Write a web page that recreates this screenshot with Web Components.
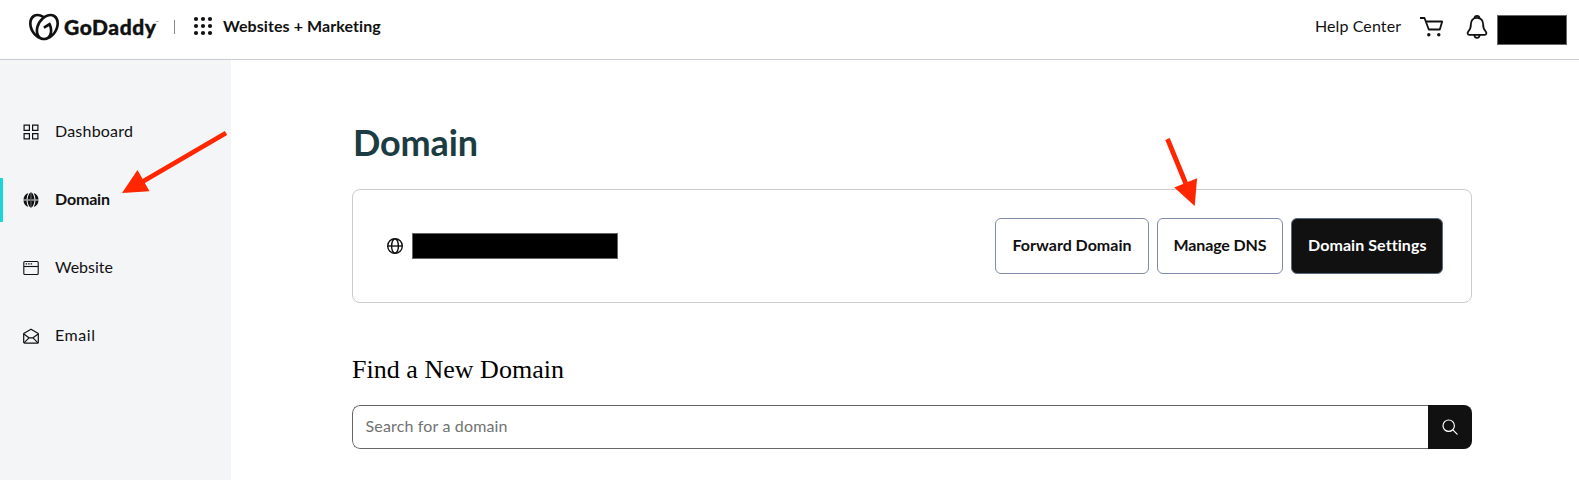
<!DOCTYPE html>
<html lang="en"><head><meta charset="utf-8"><title>Domain</title>
<style>
html,body{margin:0;height:100%;overflow:hidden;background:#fff}
body{font:16px/24px Lato,"Open Sans",sans-serif;color:#111}
</style></head><body>
<domain-app></domain-app>
<script>
const define=(name,html,init)=>customElements.define(name,class extends HTMLElement{
  connectedCallback(){
    if(this.shadowRoot)return;
    this.attachShadow({mode:'open'}).innerHTML=html;
    if(init)init(this,this.shadowRoot);
  }
});

/* One line of text, tracked out to the width given in the "width" attribute. */
define('tracked-text','<style>:host{display:block;white-space:nowrap}span{display:inline-block}</style><span><slot></slot></span>',(el,root)=>{
  const w=parseFloat(el.getAttribute('width')),span=root.querySelector('span');
  el.style.width=w+'px';
  span.style.letterSpacing='0';
  const n=el.textContent.length;
  span.style.letterSpacing=((w-span.getBoundingClientRect().width)/(n-1))+'px';
});

const icons={
  dashboard:'<g fill="none" stroke="#111" stroke-width="1.2"><path d="M1.1 1.1h5.3v5.3H1.1zM9.6 1.1h5.3v5.3H9.6zM1.1 9.6h5.3v5.3H1.1zM9.6 9.6h5.3v5.3H9.6z"/></g>',
  globeFill:'<path fill="#111" d="M5.3.9A7.5 7.5 0 0 0 .5 7.5h3A15 15 0 0 1 5.3.9zM.5 8.5a7.5 7.5 0 0 0 4.8 6.6A15 15 0 0 1 3.5 8.5zM10.7.9a7.5 7.5 0 0 1 4.8 6.6h-3A15 15 0 0 0 10.7.9zM15.5 8.5a7.5 7.5 0 0 1-4.8 6.6 15 15 0 0 0 1.8-6.6zM7.6.5C5.8 1.5 4.7 4.5 4.6 7.5H7.6zM8.4.5C10.2 1.5 11.3 4.5 11.4 7.5H8.4zM7.6 15.5C5.8 14.5 4.7 11.5 4.6 8.5H7.6zM8.4 15.5C10.2 14.5 11.3 11.5 11.4 8.5H8.4z"/><path stroke="#111" stroke-width="1" d="M8 .5v15"/><path stroke="#777" d="M.7 8h14.6"/>',
  website:'<g fill="none" stroke="#111" stroke-width="1.1"><rect x=".8" y="1.5" width="14.4" height="13" rx="1"/><path d="M.8 6.5h14.4"/><path stroke-width="1.2" stroke-dasharray="1.5 1" d="M2.600 3.9h6.5"/></g>',
  email:'<g fill="none" stroke="#111" stroke-width="1.2" stroke-linejoin="round"><path d="M.7 5.6 8 1.2l7.3 4.4v8.600a1 1 0 0 1-1 1H1.7a1 1 0 0 1-1-1z"/><path d="M.8 5.9 6 9.8h4l5.2-3.9M1 14.8l5-5M15 14.8l-5-5"/></g>',
  globe:'<g fill="none" stroke="#111" stroke-width="1.4"><circle cx="8" cy="8" r="7.3"/><ellipse cx="8" cy="8" rx="3.4" ry="7.3"/><path d="M.7 8h14.6"/></g>',
  search:'<g fill="none" stroke="#fff" stroke-width="1.2" stroke-linecap="round"><circle cx="6.7" cy="6.7" r="5.7"/><path d="m10.9 10.9 4.2 4.2"/></g>'
};
customElements.define('ui-icon',class extends HTMLElement{
  static observedAttributes=['name'];
  attributeChangedCallback(){
    const root=this.shadowRoot||this.attachShadow({mode:'open'});
    root.innerHTML='<style>:host{display:block;flex:none;width:16px;height:16px}svg{display:block}</style><svg width="16" height="16" viewBox="0 0 16 16">'+icons[this.getAttribute('name')]+'</svg>';
  }
});

define('redacted-bar','<style>:host{display:block;box-sizing:border-box;background:#000;border:1px solid #666;flex:none}</style>');

define('brand-logo',`<style>
:host{display:flex;align-items:flex-start;height:54px}
.heart{display:block;margin-top:12.5px}
tracked-text{font-weight:900;font-size:21px;line-height:28px;margin:13px 0 0 5px;-webkit-text-stroke:.4px #111}
small{font-size:3px;line-height:4px;margin-top:20px}
</style>
<svg class="heart" width="30" height="30" viewBox="0 0 24 24"><path fill="#111" d="M20.702 2.29c-2.494-1.554-5.778-1.187-8.706.654C9.076 1.104 5.79.736 3.3 2.29c-3.941 2.463-4.42 8.806-1.07 14.167 2.47 3.954 6.333 6.269 9.77 6.226 3.439.043 7.301-2.273 9.771-6.226 3.347-5.361 2.872-11.704-1.069-14.167zM4.042 15.328a12.838 12.838 0 01-1.546-3.541 10.12 10.12 0 01-.336-3.338c.15-1.98.956-3.524 2.27-4.345 1.315-.822 3.052-.87 4.903-.137.281.113.556.24.825.382A15.11 15.11 0 007.5 7.54c-2.035 3.255-2.655 6.878-1.945 9.765a13.247 13.247 0 01-1.514-1.98zm17.465-3.541a12.866 12.866 0 01-1.547 3.54 13.25 13.25 0 01-1.513 1.984c.635-2.589.203-5.76-1.353-8.734a.39.39 0 00-.563-.153l-4.852 3.032a.397.397 0 00-.126.546l.712 1.139a.395.395 0 00.547.126l3.145-1.965c.101.306.203.606.28.916.296 1.086.41 2.214.335 3.337-.15 1.982-.956 3.525-2.27 4.347a4.437 4.437 0 01-2.25.65h-.101a4.432 4.432 0 01-2.25-.65c-1.314-.822-2.121-2.365-2.27-4.347-.074-1.123.04-2.251.336-3.337a13.05 13.05 0 014.05-6.482 10.148 10.148 0 012.849-1.765c1.845-.733 3.586-.685 4.9.137 1.316.822 2.122 2.365 2.271 4.345a10.146 10.146 0 01-.33 3.334z"/></svg>
<tracked-text width="92">GoDaddy</tracked-text><small>™</small>`);

define('app-header',`<style>
:host{display:flex;box-sizing:border-box;height:60px;padding:0 12px 6px 29px;border-bottom:1px solid #c8ccd2;align-items:center;background:#fff}
brand-logo{width:145px}
.rule{width:1px;height:14px;background:#888}
.grid{margin:-1px 0 0 18px}
.product{font-weight:700;margin:-2px 0 0 10px}
.help{margin:-2px 0 0 auto}
.cart{margin-left:18px}
.bell{margin-left:21px}
redacted-bar{width:70px;height:30px;margin:6px 0 0 9px}
svg{display:block;flex:none}
</style>
<brand-logo></brand-logo><div class="rule"></div>
<svg class="grid" width="20" height="20" viewBox="0 0 20 20" fill="#111"><circle cx="3" cy="3" r="2.1"/><circle cx="10" cy="3" r="2.1"/><circle cx="17" cy="3" r="2.1"/><circle cx="3" cy="10" r="2.1"/><circle cx="10" cy="10" r="2.1"/><circle cx="17" cy="10" r="2.1"/><circle cx="3" cy="17" r="2.1"/><circle cx="10" cy="17" r="2.1"/><circle cx="17" cy="17" r="2.1"/></svg>
<tracked-text class="product" width="158">Websites + Marketing</tracked-text>
<tracked-text class="help" width="86">Help Center</tracked-text>
<svg class="cart" width="26" height="22" viewBox="0 0 26 22"><path d="M1 2h4.500l4.300 11.500h11L23.200 5.500H7.200" fill="none" stroke="#111" stroke-width="1.8" stroke-linejoin="round"/><circle cx="9.800" cy="18.700" r="1.7" fill="#111"/><circle cx="19.800" cy="18.700" r="1.7" fill="#111"/></svg>
<svg class="bell" width="22" height="26" viewBox="0 0 22 26" fill="none" stroke="#111" stroke-width="1.8" stroke-linejoin="round"><path d="M11 3.800c-4 0-6.100 2.900-6.100 6.500 0 4-.8 5.300-2.500 7-1.300 1.400-1 3.600 1 3.600h15.200c2 0 2.300-2.200 1-3.600-1.700-1.700-2.500-3-2.500-7 0-3.600-2.100-6.500-6.100-6.500z"/><path d="M8.500 4.200c.3-3.200 4.700-3.200 5 0M8.300 21c.3 3.700 5.100 3.700 5.400 0"/></svg>
<redacted-bar></redacted-bar>`);

define('nav-item',`<style>
:host{display:flex;box-sizing:border-box;height:44px;align-items:center;padding-left:20px;gap:16px;border-left:3px solid transparent}
:host([active]){border-color:#1bd5d8;font-weight:700}
::slotted(*){margin-top:-2px}
</style><ui-icon></ui-icon><slot></slot>`,(el,root)=>root.querySelector('ui-icon').setAttribute('name',el.getAttribute('icon')));

define('side-nav',`<style>
:host{display:flex;flex-direction:column;gap:24px;box-sizing:border-box;width:231px;padding-top:50px;background:#f4f5f7}
</style>
<nav-item icon="dashboard"><tracked-text width="78">Dashboard</tracked-text></nav-item>
<nav-item icon="globeFill" active><tracked-text width="55">Domain</tracked-text></nav-item>
<nav-item icon="website"><tracked-text width="58">Website</tracked-text></nav-item>
<nav-item icon="email"><tracked-text width="40">Email</tracked-text></nav-item>`);

define('action-button',`<style>
:host{display:flex;box-sizing:border-box;height:56px;align-items:center;justify-content:center;border:1px solid #7f8ba8;border-radius:6px;font-weight:700;background:#fff;padding-bottom:2px}
:host([primary]){background:#111;color:#fff;border-color:#5b6980}
</style><slot></slot>`);

define('domain-card',`<style>
:host{display:flex;box-sizing:border-box;height:114px;align-items:center;border:1px solid #ccc;border-radius:8px;padding:0 28px 0 34px}
redacted-bar{width:206px;height:26px;margin-left:9px}
.actions{display:flex;gap:8px;margin-left:auto}
</style>
<ui-icon name="globe"></ui-icon><redacted-bar></redacted-bar>
<div class="actions">
<action-button style="width:154px"><tracked-text width="119">Forward Domain</tracked-text></action-button>
<action-button style="width:126px"><tracked-text width="93">Manage DNS</tracked-text></action-button>
<action-button primary style="width:152px"><tracked-text width="118">Domain Settings</tracked-text></action-button>
</div>`);

define('domain-search',`<style>
:host{display:flex;box-sizing:border-box;height:44px;border-radius:8px;overflow:hidden}
.field{flex:1;display:flex;align-items:center;box-sizing:border-box;border:1px solid #666;border-right:0;border-radius:8px 0 0 8px;padding:0 0 2px 12.5px;color:#717171}
.go{width:44px;background:#111;display:flex;align-items:center;justify-content:center}
</style>
<div class="field"><tracked-text width="142">Search for a domain</tracked-text></div><div class="go"><ui-icon name="search"></ui-icon></div>`);

define('domain-page',`<style>
:host{display:block;box-sizing:border-box;padding:58px 107px 0 121px}
h1{margin:0;padding-left:1px;font-size:36px;line-height:48px;height:71px;font-weight:700;color:#1b3c42}
h2{margin:51px 0 19px;font:26px/32px "Liberation Serif",serif;color:#000}
</style>
<h1><tracked-text width="125">Domain</tracked-text></h1>
<domain-card></domain-card>
<h2><tracked-text width="212">Find a New Domain</tracked-text></h2>
<domain-search></domain-search>`);

define('arrow-notes',`<style>:host{display:block;position:absolute;inset:0;pointer-events:none}svg{display:block}</style>
<svg width="1579" height="480" fill="#ff2600" stroke="#ff2600"><path d="M226 133 142 182M1167.5 139 1186 184" stroke-width="4.8"/><path stroke="none" d="m122 193 15.5-23 12 21.3zM1194.7 206l-20.4-18.5 22.8-9.3z"/></svg>`);

define('domain-app',`<style>
:host{display:grid;position:relative;grid-template:60px 420px/231px 1fr;width:1579px;height:480px;overflow:hidden}
app-header{grid-column:1/3}
</style>
<app-header></app-header><side-nav></side-nav><domain-page></domain-page><arrow-notes></arrow-notes>`);
</script></body></html>
